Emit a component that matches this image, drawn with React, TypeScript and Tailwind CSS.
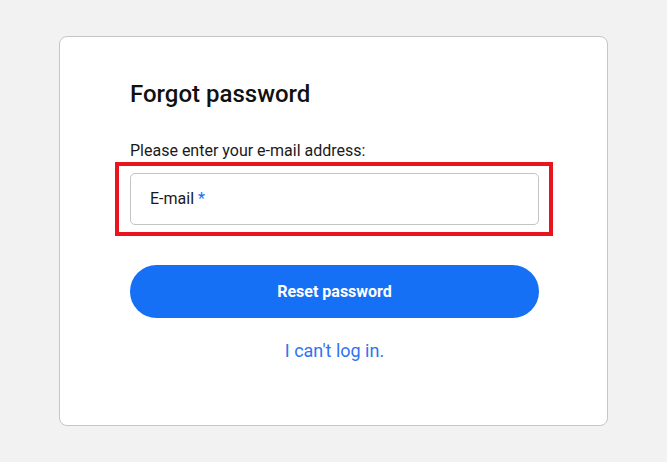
export default function App() {
  return (
    <div className="min-h-screen w-full bg-[#f2f2f2] flex justify-center pt-[36px] font-['Roboto',sans-serif]">
      <div className="w-[549px] h-[390px] bg-white border border-[#c6c6c6] rounded-[8px] pl-[70px] pr-[68px] pt-[42px]">
        <h1 className="text-[24px] leading-[30px] font-medium text-[#111]">Forgot password</h1>

        <p className="mt-[32px] text-[16px] leading-[20px] text-[#1a1a1a]">
          Please enter your e-mail address:
        </p>

        <div className="relative mt-[12px]">
          <div className="h-[52px] border border-[#c4c4c4] rounded-[5px] flex items-center px-[19px] text-[16px] text-[#1a1a1a]">
            E-mail <span className="ml-[4px] text-[#1570f5]">*</span>
          </div>
          {/* highlight box */}
          <div className="absolute left-[-15px] right-[-14px] top-[-11px] bottom-[-11px] border-[4px] border-[#e8151f] pointer-events-none" />
        </div>

        <button className="mt-[40px] w-full h-[53px] rounded-full bg-[#1570f5] text-white text-[16px] font-bold">
          Reset password
        </button>

        <div className="mt-[19px] text-center">
          <a href="#" className="text-[18px] text-[#2f73f0]">I can't log in.</a>
        </div>
      </div>
    </div>
  );
}
